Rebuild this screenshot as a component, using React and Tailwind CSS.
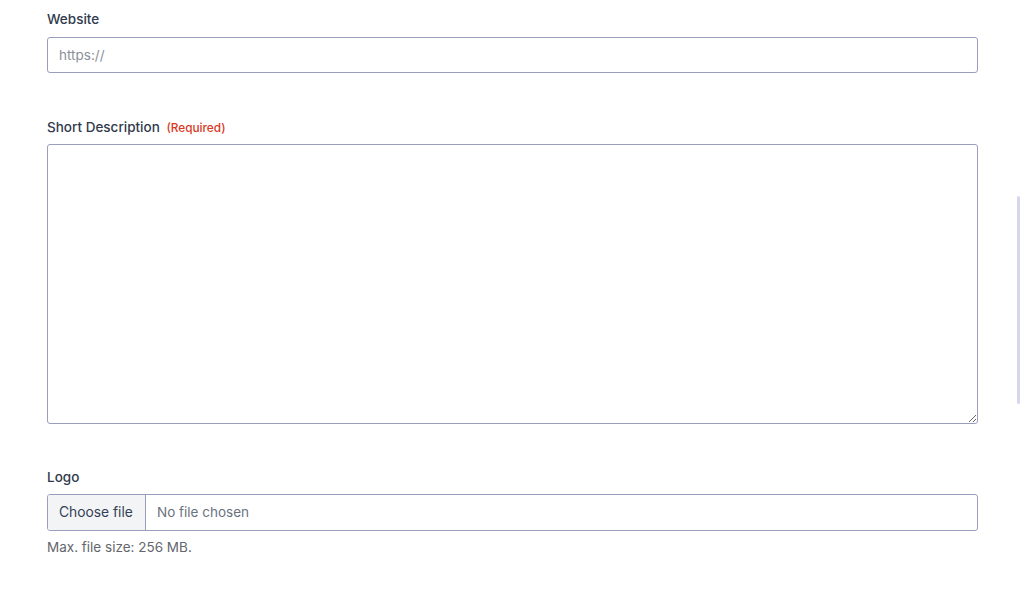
import React from "react";

export default function App() {
  return (
    <div className="relative min-h-[591px] bg-white" style={{ fontFamily: "Inter, 'Noto Sans', sans-serif" }}>
      <div className="w-[931px] ml-[47px] pt-[9px]">
        {/* Website */}
        <div>
          <label className="block text-[13.5px] leading-5 font-medium text-[#2f3a4c] mb-[8px]">Website</label>
          <input
            type="text"
            placeholder="https://"
            className="block w-full h-[36px] px-[11px] text-[13.5px] text-[#334155] placeholder-[#8a8f98] border border-[#9b9dbd] rounded-[3px] outline-none"
          />
        </div>

        {/* Short description */}
        <div className="mt-[44px]">
          <label className="block text-[13.5px] leading-5 font-medium text-[#2f3a4c] mb-[6px]">
            Short Description <span className="text-[11.8px] font-medium text-[#d9381e] ml-[3px]">(Required)</span>
          </label>
          <textarea className="block w-full h-[280px] px-[12px] py-[8px] text-[13.5px] border border-[#9b9dbd] rounded-[3px] outline-none resize-y" />
        </div>

        {/* Logo */}
        <div className="mt-[43px]">
          <label className="block text-[13.5px] leading-5 font-medium text-[#2f3a4c] mb-[7px]">Logo</label>
          <div className="flex h-[37px] border border-[#9b9dbd] rounded-[3px] overflow-hidden">
            <span className="flex items-center px-[11px] w-[98px] bg-[#f3f4f6] border-r border-[#9b9dbd] text-[13.8px] text-[#334155]">
              Choose file
            </span>
            <span className="flex items-center px-[11px] text-[13.5px] text-[#6b7280]">No file chosen</span>
          </div>
          <p className="mt-[8px] text-[13.5px] leading-4 text-[#64666b]">Max. file size: 256 MB.</p>
        </div>
      </div>

      {/* scroll indicator */}
      <div className="absolute left-[1017px] top-[196px] w-[3px] h-[208px] rounded-full bg-[#d6d6ec]" />
    </div>
  );
}
